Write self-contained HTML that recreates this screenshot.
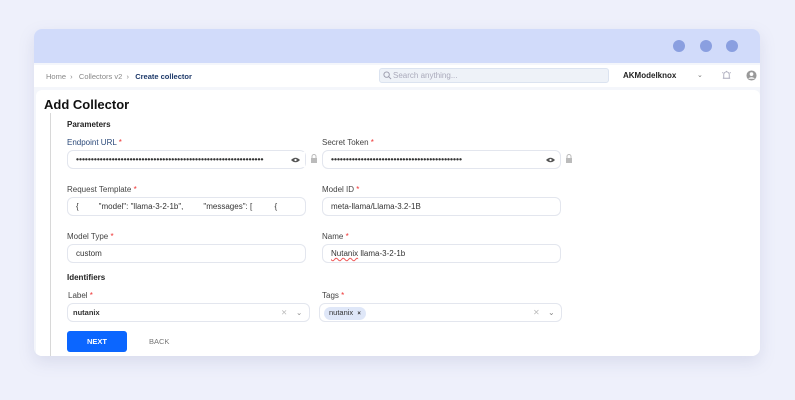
<!DOCTYPE html>
<html><head><style>
*{margin:0;padding:0;box-sizing:border-box}
body{width:795px;height:400px;background:#eef0fb;font-family:"Liberation Sans",sans-serif;position:relative;overflow:hidden}
.win{position:absolute;left:34px;top:29px;width:726px;height:327px;background:#f4f6fb;border-radius:8px;overflow:hidden;box-shadow:0 6px 16px rgba(120,130,170,.18)}
.hd{position:absolute;left:0;top:0;width:726px;height:34px;background:#d1dbfa}
.dot{position:absolute;top:11px;width:12px;height:12px;border-radius:50%;background:#8a9fe0}
.nav{position:absolute;left:0;top:36px;width:726px;height:22px;background:#fff}
.a{position:absolute;font-size:7px;white-space:nowrap}
.main{position:absolute;left:2px;top:61px;width:724px;height:266px;background:#fff;border-radius:6px 6px 0 0}
.t{position:absolute;white-space:nowrap}
.lbl{font-size:8px;color:#444}
.lbl b{color:#e33;font-weight:normal}
.in{position:absolute;height:19px;border:1px solid #e3e6ee;border-radius:6px;background:#fff;font-size:8px;color:#333;padding-left:8px;line-height:17px;white-space:nowrap;overflow:hidden}
.dots{letter-spacing:0px;font-size:8.5px;font-weight:bold;color:#333}
</style></head><body>
<div class="win">
<div class="hd"><div class="dot" style="left:639px"></div><div class="dot" style="left:666px"></div><div class="dot" style="left:692px"></div></div>
<div class="nav">
<span class="a" style="left:12px;top:7px;color:#888;font-size:7.5px">Home &nbsp;›&nbsp;&nbsp; Collectors v2 &nbsp;›&nbsp;&nbsp; <b style="color:#1e3a6a">Create collector</b></span>
<div style="position:absolute;left:345px;top:3px;width:230px;height:15px;background:#eef2f8;border:1px solid #dbe3f0;border-radius:3px"></div>
<svg style="position:absolute;left:349px;top:6px" width="9" height="9" viewBox="0 0 10 10"><circle cx="4" cy="4" r="3" fill="none" stroke="#99a" stroke-width="1"/><path d="M6.3 6.3L9 9" stroke="#99a" stroke-width="1"/></svg>
<span class="a" style="left:359px;top:6px;color:#aab;font-size:8px">Search anything...</span>
<span class="a" style="left:589px;top:6px;color:#222;font-weight:bold;font-size:8px">AKModelknox</span>
<span class="a" style="left:663px;top:6px;color:#777">⌄</span>
<svg style="position:absolute;left:687px;top:5px" width="11" height="11" viewBox="0 0 12 12"><path d="M3 9V5a3 3 0 016 0v4M2 9h8M6 1v1M1.5 2.5l1 1M10.5 2.5l-1 1" fill="none" stroke="#aab" stroke-width="1"/></svg>
<svg style="position:absolute;left:712px;top:5px" width="11" height="11" viewBox="0 0 12 12"><circle cx="6" cy="6" r="5.5" fill="#999"/><circle cx="6" cy="4.5" r="2" fill="#fff"/><path d="M2.5 9.5a4 3 0 017 0" fill="#fff"/></svg>
</div>
<div class="main">
<div class="t" style="left:8px;top:7px;font-size:13px;font-weight:bold;color:#111">Add Collector</div>
<div style="position:absolute;left:14px;top:23px;width:1px;height:243px;background:#d8d8d8"></div>
<div class="t" style="left:31px;top:30px;font-size:8px;font-weight:bold;color:#222">Parameters</div>
<div class="t lbl" style="left:31px;top:48px;color:#2c4a7a">Endpoint URL <b>*</b></div>
<div class="in dots" style="left:31px;top:60px;width:239px">•••••••••••••••••••••••••••••••••••••••••••••••••••••••••••••••</div>
<div style="position:absolute;left:251px;top:62px;width:18px;height:15px;background:#fff"></div>
<svg style="position:absolute;left:255px;top:67px" width="9" height="6" viewBox="0 0 10 6"><path d="M0 3Q5-2 10 3Q5 8 0 3z" fill="#555"/><circle cx="5" cy="3" r="1.3" fill="#fff"/></svg>
<svg style="position:absolute;left:274px;top:64px" width="8" height="9" viewBox="0 0 8 9"><path d="M2 4V2.5a2 2 0 014 0V4" fill="none" stroke="#bbb"/><rect x="1" y="4" width="6" height="5" fill="#bbb"/></svg>
<div class="t lbl" style="left:286px;top:48px">Secret Token <b>*</b></div>
<div class="in dots" style="left:286px;top:60px;width:239px">••••••••••••••••••••••••••••••••••••••••••••</div>
<svg style="position:absolute;left:510px;top:67px" width="9" height="6" viewBox="0 0 10 6"><path d="M0 3Q5-2 10 3Q5 8 0 3z" fill="#555"/><circle cx="5" cy="3" r="1.3" fill="#fff"/></svg>
<svg style="position:absolute;left:529px;top:64px" width="8" height="9" viewBox="0 0 8 9"><path d="M2 4V2.5a2 2 0 014 0V4" fill="none" stroke="#bbb"/><rect x="1" y="4" width="6" height="5" fill="#bbb"/></svg>
<div class="t lbl" style="left:31px;top:95px">Request Template <b>*</b></div>
<div class="in" style="left:31px;top:107px;width:239px">{ &nbsp;&nbsp;&nbsp;&nbsp;&nbsp;&nbsp;&nbsp;&nbsp;"model": "llama-3-2-1b", &nbsp;&nbsp;&nbsp;&nbsp;&nbsp;&nbsp;&nbsp;&nbsp;"messages": [ &nbsp;&nbsp;&nbsp;&nbsp;&nbsp;&nbsp;&nbsp;&nbsp;&nbsp;{</div>
<div class="t lbl" style="left:286px;top:95px">Model ID <b>*</b></div>
<div class="in" style="left:286px;top:107px;width:239px">meta-llama/Llama-3.2-1B</div>
<div class="t lbl" style="left:31px;top:142px">Model Type <b>*</b></div>
<div class="in" style="left:31px;top:154px;width:239px">custom</div>
<div class="t lbl" style="left:286px;top:142px">Name <b>*</b></div>
<div class="in" style="left:286px;top:154px;width:239px"><span style="text-decoration:underline wavy #e55;text-decoration-thickness:0.5px">Nutanix</span> llama-3-2-1b</div>
<div class="t" style="left:31px;top:183px;font-size:8px;font-weight:bold;color:#222">Identifiers</div>
<div class="t lbl" style="left:32px;top:201px">Label <b>*</b></div>
<div class="in" style="left:31px;top:213px;width:243px;padding-left:5px;font-weight:bold;font-size:7.5px">nutanix<span style="position:absolute;left:213px;color:#bbb;font-weight:normal">✕</span><span style="position:absolute;left:228px;color:#888;font-weight:normal">⌄</span></div>
<div class="t lbl" style="left:286px;top:201px">Tags <b>*</b></div>
<div class="in" style="left:283px;top:213px;width:243px;padding-left:4px"><span style="display:inline-block;background:#dfe7f8;border-radius:7px;padding:0 5px;line-height:12px;margin-top:2px;font-size:7.5px">nutanix &nbsp;<b style="font-size:6px">×</b></span><span style="position:absolute;left:213px;color:#bbb">✕</span><span style="position:absolute;left:228px;color:#888">⌄</span></div>
<div style="position:absolute;left:31px;top:241px;width:60px;height:21px;background:#0b66ff;border-radius:3px;color:#fff;font-size:7.5px;font-weight:bold;text-align:center;line-height:21px">NEXT</div>
<div class="t" style="left:113px;top:247px;font-size:7.5px;color:#777">BACK</div>
</div>
</div>
</body></html>
